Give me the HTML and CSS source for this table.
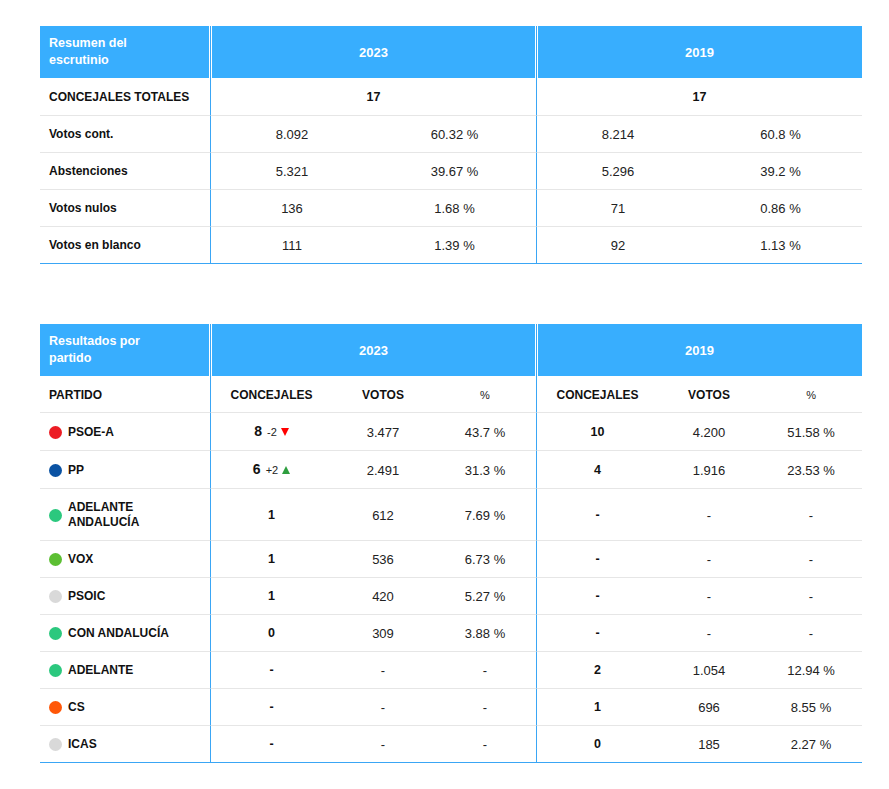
FILE: index.html
```html
<!DOCTYPE html>
<html lang="es">
<head>
<meta charset="utf-8">
<title>Resultados</title>
<link rel="stylesheet" href="styles.css">
</head>
<body>
<main class="page">
  <table class="results summary">
    <colgroup>
      <col class="c-label"><col class="c-half"><col class="c-half"><col class="c-half"><col class="c-half">
    </colgroup>
    <thead>
      <tr>
        <th class="title before-sep"><span class="title-text">Resumen del escrutinio</span></th>
        <th class="year sep before-sep" colspan="2">2023</th>
        <th class="year sep" colspan="2">2019</th>
      </tr>
    </thead>
    <tbody>
      <tr class="first">
        <td class="label">CONCEJALES TOTALES</td>
        <td class="num strong sep" colspan="2">17</td>
        <td class="num strong sep" colspan="2">17</td>
      </tr>
      <tr>
        <td class="label">Votos cont.</td>
        <td class="num sep">8.092</td><td class="num">60.32 %</td>
        <td class="num sep">8.214</td><td class="num">60.8 %</td>
      </tr>
      <tr>
        <td class="label">Abstenciones</td>
        <td class="num sep">5.321</td><td class="num">39.67 %</td>
        <td class="num sep">5.296</td><td class="num">39.2 %</td>
      </tr>
      <tr>
        <td class="label">Votos nulos</td>
        <td class="num sep">136</td><td class="num">1.68 %</td>
        <td class="num sep">71</td><td class="num">0.86 %</td>
      </tr>
      <tr class="last">
        <td class="label">Votos en blanco</td>
        <td class="num sep">111</td><td class="num">1.39 %</td>
        <td class="num sep">92</td><td class="num">1.13 %</td>
      </tr>
    </tbody>
  </table>

  <table class="results parties">
    <colgroup>
      <col class="c-label"><col class="c-conc"><col class="c-num"><col class="c-num"><col class="c-conc"><col class="c-num"><col class="c-num">
    </colgroup>
    <thead>
      <tr>
        <th class="title before-sep"><span class="title-text">Resultados por partido</span></th>
        <th class="year sep before-sep" colspan="3">2023</th>
        <th class="year sep" colspan="3">2019</th>
      </tr>
    </thead>
    <tbody>
      <tr class="subhead">
        <td class="label">PARTIDO</td>
        <td class="num strong sep">CONCEJALES</td><td class="num strong">VOTOS</td><td class="num pct-h">%</td>
        <td class="num strong sep">CONCEJALES</td><td class="num strong">VOTOS</td><td class="num pct-h">%</td>
      </tr>
      <tr>
        <td class="label"><div class="party"><span class="dot psoe"></span><span>PSOE-A</span></div></td>
        <td class="num strong sep"><span class="seats">8</span><span class="diff">-2</span><span class="tri down"></span></td><td class="num">3.477</td><td class="num">43.7 %</td>
        <td class="num strong sep">10</td><td class="num">4.200</td><td class="num">51.58 %</td>
      </tr>
      <tr>
        <td class="label"><div class="party"><span class="dot pp"></span><span>PP</span></div></td>
        <td class="num strong sep"><span class="seats">6</span><span class="diff">+2</span><span class="tri up"></span></td><td class="num">2.491</td><td class="num">31.3 %</td>
        <td class="num strong sep">4</td><td class="num">1.916</td><td class="num">23.53 %</td>
      </tr>
      <tr>
        <td class="label"><div class="party"><span class="dot adelante"></span><span>ADELANTE<br>ANDALUCÍA</span></div></td>
        <td class="num strong sep">1</td><td class="num">612</td><td class="num">7.69 %</td>
        <td class="num strong sep">-</td><td class="num">-</td><td class="num">-</td>
      </tr>
      <tr>
        <td class="label"><div class="party"><span class="dot vox"></span><span>VOX</span></div></td>
        <td class="num strong sep">1</td><td class="num">536</td><td class="num">6.73 %</td>
        <td class="num strong sep">-</td><td class="num">-</td><td class="num">-</td>
      </tr>
      <tr>
        <td class="label"><div class="party"><span class="dot grey"></span><span>PSOIC</span></div></td>
        <td class="num strong sep">1</td><td class="num">420</td><td class="num">5.27 %</td>
        <td class="num strong sep">-</td><td class="num">-</td><td class="num">-</td>
      </tr>
      <tr>
        <td class="label"><div class="party"><span class="dot adelante"></span><span>CON ANDALUCÍA</span></div></td>
        <td class="num strong sep">0</td><td class="num">309</td><td class="num">3.88 %</td>
        <td class="num strong sep">-</td><td class="num">-</td><td class="num">-</td>
      </tr>
      <tr>
        <td class="label"><div class="party"><span class="dot adelante"></span><span>ADELANTE</span></div></td>
        <td class="num strong sep">-</td><td class="num">-</td><td class="num">-</td>
        <td class="num strong sep">2</td><td class="num">1.054</td><td class="num">12.94 %</td>
      </tr>
      <tr>
        <td class="label"><div class="party"><span class="dot cs"></span><span>CS</span></div></td>
        <td class="num strong sep">-</td><td class="num">-</td><td class="num">-</td>
        <td class="num strong sep">1</td><td class="num">696</td><td class="num">8.55 %</td>
      </tr>
      <tr class="last">
        <td class="label"><div class="party"><span class="dot grey"></span><span>ICAS</span></div></td>
        <td class="num strong sep">-</td><td class="num">-</td><td class="num">-</td>
        <td class="num strong sep">0</td><td class="num">185</td><td class="num">2.27 %</td>
      </tr>
    </tbody>
  </table>
</main>
</body>
</html>
```

FILE: styles.css
```css
html, body {
  margin: 0;
  padding: 0;
  background: #ffffff;
}

body {
  font-family: "Liberation Sans", Arial, sans-serif;
  color: #111111;
}

.page {
  padding: 26px 0 0 40px;
  display: flex;
  flex-direction: column;
  gap: 60px;
}

.results {
  width: 822px;
  table-layout: fixed;
  border-collapse: separate;
  border-spacing: 0;
}

.c-label { width: 170px; }
.c-half { width: 163px; }
.c-conc { width: 122px; }
.c-num { width: 102px; }

.results th {
  background: #38aefe;
  color: #ffffff;
  height: 52px;
  padding: 0 9px;
  box-sizing: border-box;
  font-weight: 700;
  vertical-align: middle;
}

.results th.title {
  text-align: left;
  font-size: 12.5px;
  line-height: 17px;
}

.title-text {
  display: block;
  max-width: 108px;
}

.results th.year {
  text-align: center;
  font-size: 13px;
}

.results th.sep {
  border-left: 1px solid #3aa6f5;
  box-shadow: inset 1px 0 0 #ffffff;
}

.results th.before-sep {
  box-shadow: inset -1px 0 0 #ffffff;
}

.results th.sep.before-sep {
  box-shadow: inset 1px 0 0 #ffffff, inset -1px 0 0 #ffffff;
}

.results td {
  padding: 11px 9px 10px;
  line-height: 15px;
  border-bottom: 1px solid #e6e6e6;
  vertical-align: middle;
}

.results tr.first td {
  padding-top: 12px;
}

.results tr.subhead td {
  padding-top: 12px;
  padding-bottom: 9px;
}

.results tr.last td {
  border-bottom-color: #3aa6f5;
}

.results td.sep {
  border-left: 1px solid #3aa6f5;
}

.label {
  font-size: 12px;
  font-weight: 700;
  text-align: left;
  color: #111111;
}

.num {
  font-size: 13px;
  text-align: center;
  color: #222222;
}

.num.strong {
  font-weight: 700;
  font-size: 12.5px;
  color: #111111;
}

.subhead .num.strong {
  font-size: 12px;
}

.pct-h {
  font-size: 11px;
}

.party {
  display: flex;
  align-items: center;
  gap: 6px;
}

.dot {
  flex: none;
  width: 13px;
  height: 13px;
  border-radius: 50%;
}

.dot.psoe { background: #ec1c24; }
.dot.pp { background: #0a52a3; }
.dot.adelante { background: #2bc87e; }
.dot.vox { background: #5cbf33; }
.dot.grey { background: #d9d9d9; }
.dot.cs { background: #ff5708; }

.seats {
  font-size: 14px;
}

.diff {
  font-weight: 400;
  font-size: 11px;
  color: #222222;
  margin-left: 5px;
}

.tri {
  display: inline-block;
  width: 0;
  height: 0;
  margin-left: 4px;
  border-left: 4.5px solid transparent;
  border-right: 4.5px solid transparent;
  vertical-align: 0;
}

.tri.down {
  border-top: 8px solid #ff0000;
}

.tri.up {
  border-bottom: 8px solid #2e9e3f;
}
```
